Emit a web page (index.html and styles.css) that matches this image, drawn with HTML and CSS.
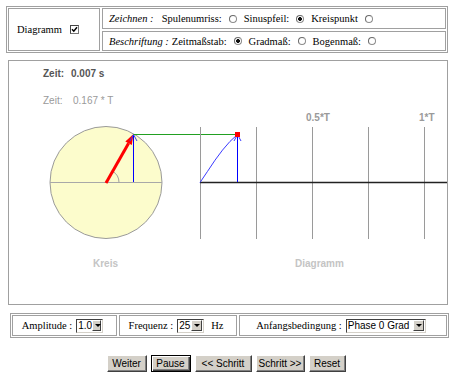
FILE: index.html
```html
<!DOCTYPE html>
<html lang="de">
<head>
    <meta charset="UTF-8">
    <title>Wechselstrom - Zeigerdiagramm</title>
    <link rel="stylesheet" href="styles.css">
</head>
<body>
    <!-- Settings -->
    <div class="settings">
        <div class="cell diagram-cell">
            <span>Diagramm</span>
            <input type="checkbox" class="check" checked>
        </div>
        <div class="cell">
            <i class="heading">Zeichnen :</i>
            <span>Spulenumriss:</span><input type="radio" name="draw" class="radio">
            <span>Sinuspfeil:</span><input type="radio" name="draw" class="radio" checked>
            <span>Kreispunkt</span><input type="radio" name="draw2" class="radio">
        </div>
        <div class="cell">
            <i class="heading short">Beschriftung :</i>
            <span>Zeitmaßstab:</span><input type="radio" name="scale" class="radio" checked>
            <span>Gradmaß:</span><input type="radio" name="scale" class="radio">
            <span>Bogenmaß:</span><input type="radio" name="scale" class="radio">
        </div>
    </div>

    <!-- Applet area -->
    <div class="panel">
        <svg width="438" height="243" viewBox="9 61 438 243">
            <g class="info">
                <text x="43" y="77" class="time">Zeit:</text>
                <text x="71" y="77" class="time">0.007 s</text>
                <text x="43" y="104" class="period">Zeit:</text>
                <text x="73" y="104" class="period">0.167 * T</text>
            </g>

            <!-- Kreis -->
            <circle cx="106" cy="182.5" r="56" fill="#fcfccc" stroke="#9a9a9a"/>
            <line x1="50" y1="182.5" x2="162" y2="182.5" stroke="#a8a8a8"/>
            <path d="M119 182.5 A13 13 0 0 0 112.5 171.2" fill="none" stroke="#a0a0a0"/>
            <line x1="106" y1="183" x2="128.6" y2="143.2" stroke="#f00" stroke-width="3"/>
            <polygon points="133.5,134 131.8,145 125.3,141.4" fill="#f00"/>
            <line x1="133.5" y1="182" x2="133.5" y2="135" stroke="#0000ff"/>
            <polyline points="130,141 133.5,134.5 137,141" fill="none" stroke="#3a3aff"/>
            <line x1="133.5" y1="134.5" x2="237.5" y2="134.5" stroke="#22a022"/>

            <!-- Diagramm -->
            <g stroke="#9a9a9a">
                <line x1="200.5" y1="127" x2="200.5" y2="239"/>
                <line x1="256.5" y1="127" x2="256.5" y2="239"/>
                <line x1="312.5" y1="127" x2="312.5" y2="239"/>
                <line x1="368.5" y1="127" x2="368.5" y2="239"/>
                <line x1="424.5" y1="127" x2="424.5" y2="239"/>
            </g>
            <line x1="200" y1="182.5" x2="447" y2="182.5" stroke="#222" stroke-width="1.5"/>
            <polyline points="200,182.5 207.5,171.4 215,160.2 222.5,150.1 230,141.4 237.5,134.5" fill="none" stroke="#3a3aff"/>
            <line x1="237.5" y1="182" x2="237.5" y2="135" stroke="#0000ff"/>
            <polyline points="234,141 237.5,134.5 241,141" fill="none" stroke="#3a3aff"/>
            <rect x="235" y="132" width="5" height="5" fill="#f00"/>

            <text x="306" y="121" class="tick">0.5*T</text>
            <text x="419" y="121" class="tick">1*T</text>

            <text x="93" y="267" class="caption">Kreis</text>
            <text x="295" y="267" class="caption">Diagramm</text>
        </svg>
    </div>

    <!-- Parameters -->
    <div class="params">
        <div class="cell">
            <span>Amplitude :</span>
            <span class="select w-small"><span class="value">1.0</span><span class="drop"></span></span>
        </div>
        <div class="cell">
            <span>Frequenz :</span>
            <span class="select w-small"><span class="value">25</span><span class="drop"></span></span>
            <span class="unit">Hz</span>
        </div>
        <div class="cell">
            <span>Anfangsbedingung :</span>
            <span class="select w-wide"><span class="value">Phase 0 Grad</span><span class="drop"></span></span>
        </div>
    </div>

    <!-- Buttons -->
    <div class="buttons">
        <button class="btn b-weiter">Weiter</button>
        <button class="btn b-pause default">Pause</button>
        <button class="btn b-back">&lt;&lt; Schritt</button>
        <button class="btn b-next">Schritt &gt;&gt;</button>
        <button class="btn b-reset">Reset</button>
    </div>
</body>
</html>
```

FILE: styles.css
```css
/* General */
* {
    box-sizing: border-box;
}

body {
    margin: 0;
    padding: 6px 0 0 6px;
    background: #fff;
    color: #000;
    font-family: "Liberation Serif", "Times New Roman", serif;
    font-size: 10.5px;
}

/* Settings table */
.settings {
    display: grid;
    grid-template-columns: 92px 344px;
    grid-template-rows: 21px 20px;
    gap: 2px;
    padding: 1px;
    width: 442px;
    border: 1px solid #a0a0a0;
}

.cell {
    display: flex;
    align-items: center;
    border: 1px solid #a0a0a0;
    padding-left: 6px;
    white-space: nowrap;
}

.diagram-cell {
    grid-row: span 2;
    padding-left: 8px;
}

.heading {
    margin-right: 8px;
}

.heading.short {
    margin-right: 3px;
}

/* Radio / checkbox */
.radio,
.check {
    appearance: none;
    -webkit-appearance: none;
    margin: 0 7px;
    width: 8px;
    height: 8px;
    background: #fff;
    flex: none;
}

.radio {
    border-radius: 50%;
    border: 1px solid #8c8c8c;
    border-top-color: #6a6a6a;
    border-left-color: #6a6a6a;
}

.radio:checked {
    background: radial-gradient(circle, #111 0 1.6px, #fff 2.2px);
}

.check {
    margin-left: 8px;
    width: 9px;
    height: 9px;
    border: 1px solid #777;
    border-top-color: #444;
    border-left-color: #444;
}

.check:checked {
    background: #fff url("data:image/svg+xml,%3Csvg xmlns='http://www.w3.org/2000/svg' width='7' height='7'%3E%3Cpath d='M1 3.2 L2.8 5.2 L6 1.2' fill='none' stroke='black' stroke-width='1.5'/%3E%3C/svg%3E") no-repeat center;
}

/* Applet panel */
.panel {
    margin: 7px 0 0 2px;
    width: 440px;
    height: 245px;
    border: 1px solid #a0a0a0;
}

.panel svg {
    display: block;
    font-family: "Liberation Sans", Arial, sans-serif;
    font-size: 10px;
}

.time {
    fill: #555;
    font-weight: bold;
}

.period {
    fill: #9a9a9a;
}

.tick {
    fill: #9a9a9a;
    font-weight: bold;
}

.caption {
    fill: #c4c4c4;
    font-weight: bold;
}

/* Parameter table */
.params {
    display: grid;
    grid-template-columns: 105px 118px 208px;
    grid-template-rows: 21px;
    gap: 2px;
    padding: 1px;
    margin: 8px 0 0 4px;
    width: 439px;
    border: 1px solid #a0a0a0;
}

.params .cell {
    justify-content: center;
    padding: 0 4px 0 0;
}

.select {
    display: inline-flex;
    align-items: center;
    justify-content: space-between;
    height: 14px;
    margin-left: 4px;
    background: #fff;
    border: 1px solid;
    border-color: #404040 #d4d0c8 #d4d0c8 #404040;
    font-family: "Liberation Sans", Arial, sans-serif;
    font-size: 10px;
}

.w-small { width: 27px; }
.w-wide { width: 80px; }

.value {
    padding-left: 1px;
    line-height: 12px;
}

.drop {
    position: relative;
    width: 11px;
    height: 11px;
    margin-right: 1px;
    background: #d4d0c8;
    border: 1px solid;
    border-color: #fff #404040 #404040 #fff;
}

.drop::after {
    content: '';
    position: absolute;
    left: 2px;
    top: 3px;
    border-left: 3px solid transparent;
    border-right: 3px solid transparent;
    border-top: 3px solid #000;
}

.unit {
    margin-left: 7px;
}

/* Buttons */
.buttons {
    display: flex;
    justify-content: center;
    gap: 4px;
    width: 440px;
    margin-top: 17px;
}

.btn {
    height: 17px;
    padding: 0;
    background: #d4d0c8;
    color: #000;
    font-family: "Liberation Sans", Arial, sans-serif;
    font-size: 10px;
    white-space: nowrap;
    border: 1px solid;
    border-color: #fff #404040 #404040 #fff;
    box-shadow: inset -1px -1px #808080;
}

.btn.default {
    border: 1px solid #000;
    box-shadow: inset 1px 1px #fff, inset -1px -1px #404040, inset -2px -2px #808080;
}

.b-weiter { width: 40px; }
.b-pause { width: 40px; }
.b-back { width: 57px; }
.b-next { width: 49px; }
.b-reset { width: 37px; }
```
